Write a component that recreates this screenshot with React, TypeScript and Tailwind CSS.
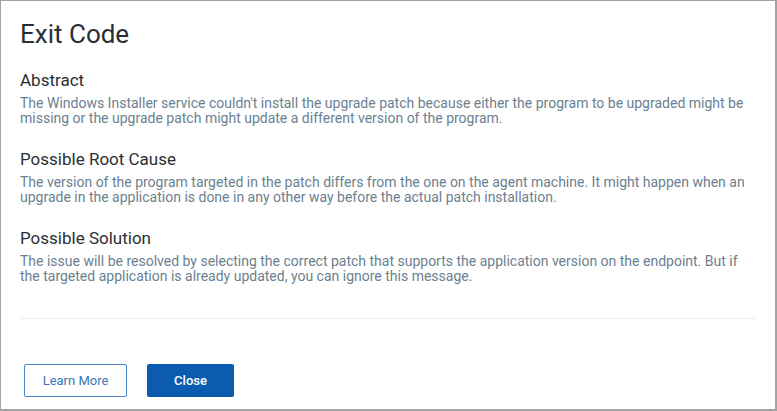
export default function App() {
  const sections = [
    {
      title: "Abstract",
      body: "The Windows Installer service couldn't install the upgrade patch because either the program to be upgraded might be missing or the upgrade patch might update a different version of the program.",
    },
    {
      title: "Possible Root Cause",
      body: "The version of the program targeted in the patch differs from the one on the agent machine. It might happen when an upgrade in the application is done in any other way before the actual patch installation.",
    },
    {
      title: "Possible Solution",
      body: "The issue will be resolved by selecting the correct patch that supports the application version on the endpoint. But if the targeted application is already updated, you can ignore this message.",
    },
  ];

  return (
    <div className="w-[777px] h-[411px] bg-white border-t border-l border-r-2 border-b-2 border-[#a3a3a3] font-['Roboto',sans-serif] flex flex-col">
      <div className="pl-[19px] pr-[20px] pt-[17px]">
        <h1 className="text-[26px] leading-[32px] text-[#2a2f35]">Exit Code</h1>
        <div className="mt-[19px] flex flex-col gap-[22px]">
          {sections.map((s) => (
            <div key={s.title}>
              <h2 className="text-[17px] leading-[22px] text-[#2a2f35]">{s.title}</h2>
              <p className="mt-[5px] text-[14px] leading-[15px] text-[#6b7f90]">{s.body}</p>
            </div>
          ))}
        </div>
      </div>
      <div className="mx-[19px] mt-[34px] border-t border-[#e8edf3]" />
      <div className="mt-auto pl-[23px] pb-[12px] flex gap-[20px]">
        <button className="w-[103px] h-[33px] rounded-[2px] border border-[#4a86c8] text-[13px] text-[#3a76b9]">
          Learn More
        </button>
        <button className="w-[87px] h-[33px] rounded-[2px] bg-[#0b5cb0] text-[13px] font-medium text-white">
          Close
        </button>
      </div>
    </div>
  );
}
